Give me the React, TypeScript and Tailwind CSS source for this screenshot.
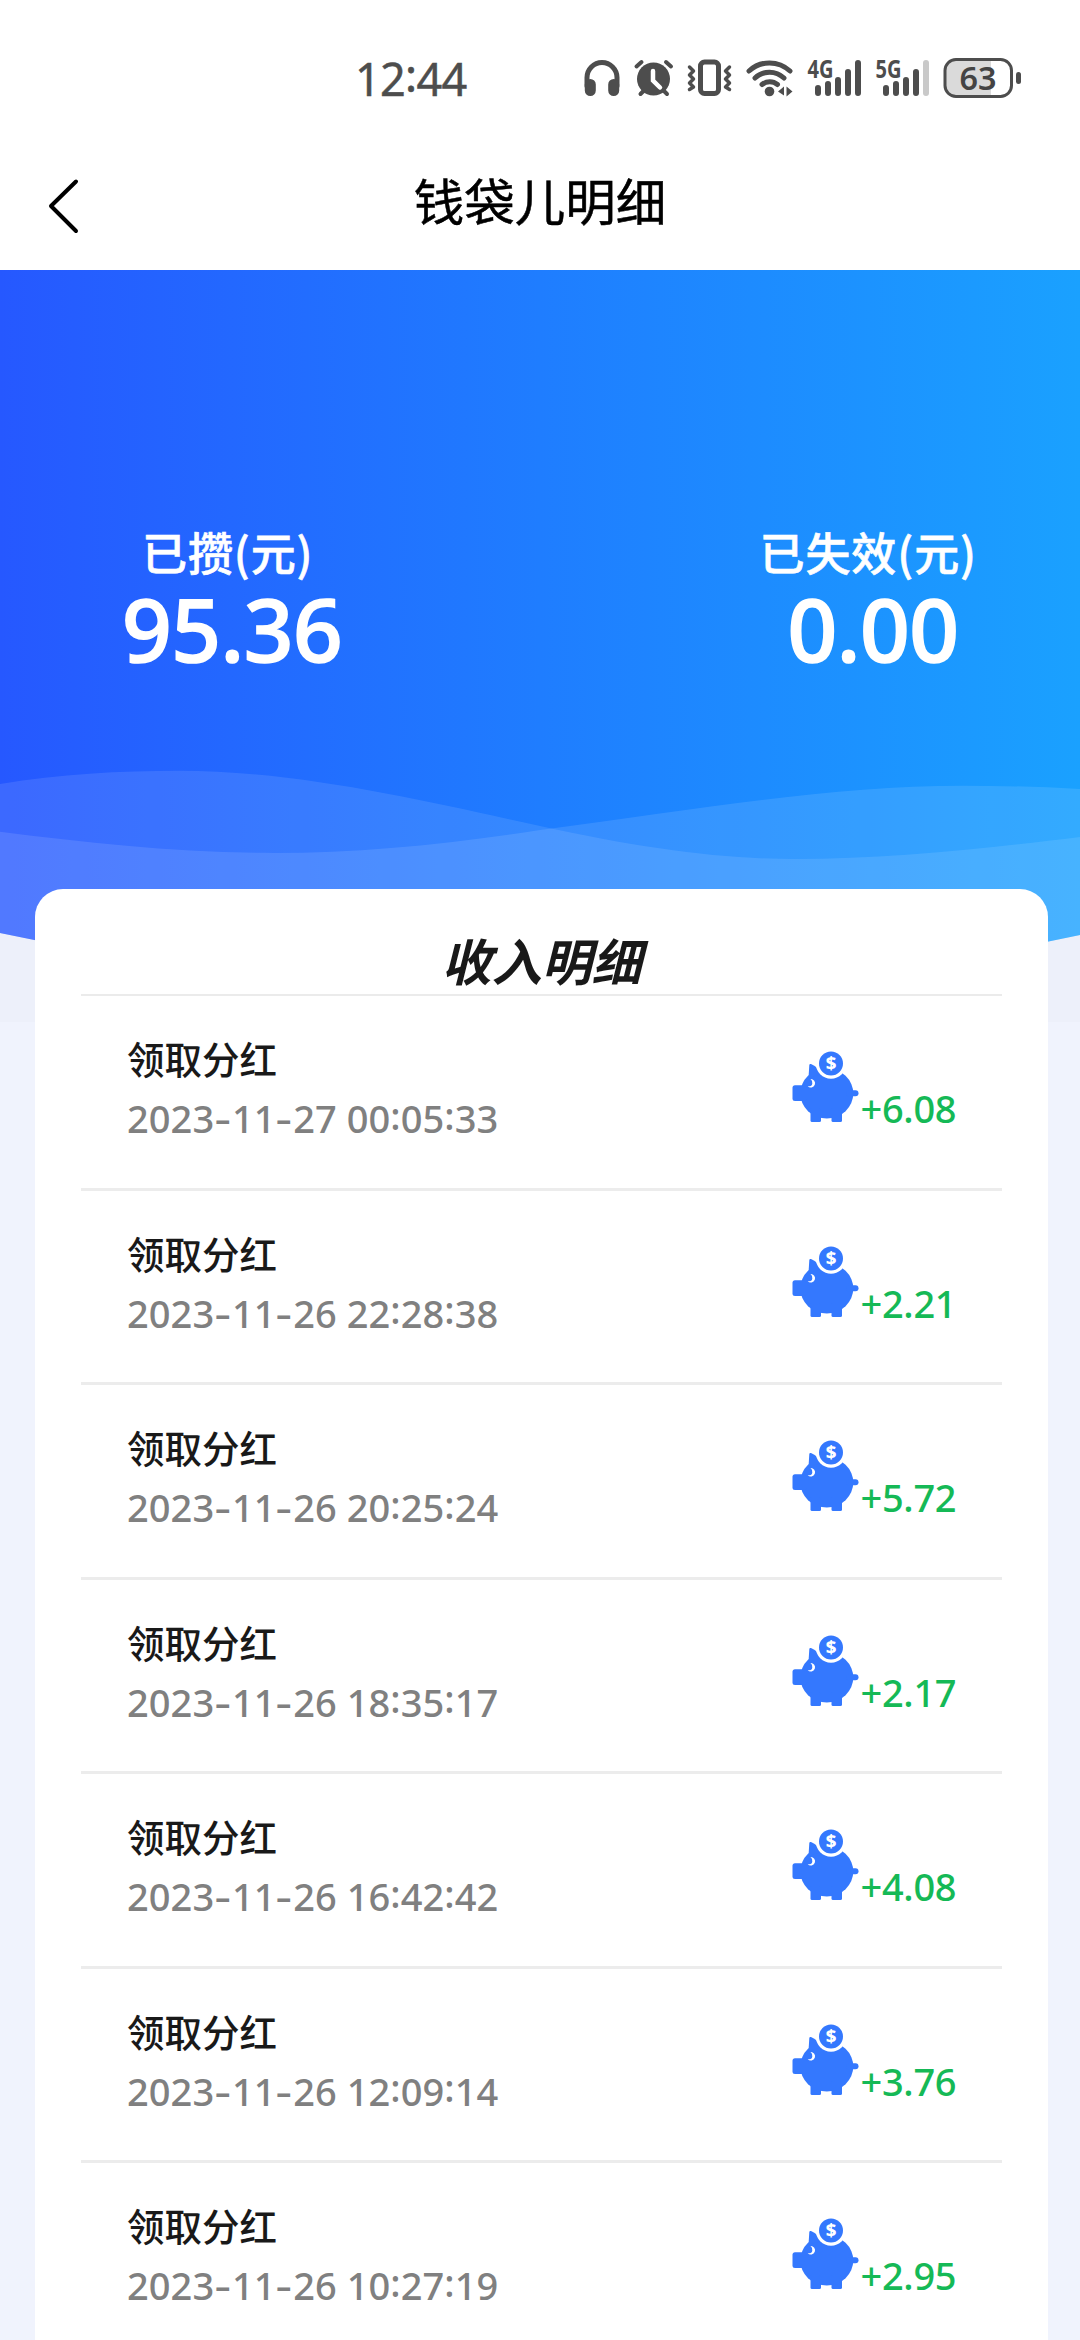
import React from "react";

const rows = [
  ["2023-11-27 00:05:33", "+6.08"],
  ["2023-11-26 22:28:38", "+2.21"],
  ["2023-11-26 20:25:24", "+5.72"],
  ["2023-11-26 18:35:17", "+2.17"],
  ["2023-11-26 16:42:42", "+4.08"],
  ["2023-11-26 12:09:14", "+3.76"],
  ["2023-11-26 10:27:19", "+2.95"],
];

const ink = "#4d4d4d";

function StatusIcons() {
  return (
    <svg width="444" height="50" viewBox="580 52 444 50" fill="none" className="shrink-0">
      <g stroke={ink} strokeLinecap="round" strokeLinejoin="round">
        <path d="M587 86V77.500a15 15 0 0 1 30 0V86" strokeWidth="5" />
        <path d="M590.300 84.500v6M613.700 84.500v6" strokeWidth="11" />
        <path d="M636.500 66.500l5-4.500M666 62l5 4.500M640.500 94l4-4M667 94l-4-4" strokeWidth="4" />
        <path d="M689.500 67l4 4-4 4 4 4-4 4 4 4-4 2.500" strokeWidth="3.500" />
        <path d="M729.500 67l-4 4 4 4-4 4 4 4-4 4 4 2.500" strokeWidth="3.500" />
        <rect x="700.500" y="62" width="18" height="31.500" rx="4" strokeWidth="5" />
        <path d="M749 71a30 30 0 0 1 41 0M755 78a21 21 0 0 1 29 0M762 84.500a12 12 0 0 1 15.500 0" strokeWidth="5" />
        <path d="M818 88v5M828 84v9M838 80v13M848 72v21M858 63v30" strokeWidth="6" />
        <path d="M886 88v5M896 84v9M906 80v13M916 72v21" strokeWidth="6" />
        <path d="M926 63v30" strokeWidth="6" stroke="#c9c9c9" />
      </g>
      <circle cx="653.500" cy="79" r="16.500" fill={ink} />
      <path d="M653 71v9.500l7 7" stroke="#fff" strokeWidth="4.500" strokeLinecap="round" />
      <circle cx="769.500" cy="91.500" r="4.800" fill={ink} />
      <path d="M778 91.500l6-5v9zM786.500 86.500l6 5-6 5z" fill={ink} />
      <text x="807.500" y="77.500" fontSize="24.500" textLength="26" lengthAdjust="spacingAndGlyphs" fontWeight="700" fill={ink} fontFamily="Noto Sans">4G</text>
      <text x="875.500" y="77.500" fontSize="24.500" textLength="26" lengthAdjust="spacingAndGlyphs" fontWeight="700" fill={ink} fontFamily="Noto Sans">5G</text>
      <path d="M991 60v36h-34q-11 0-11-11V71q0-11 11-11z" fill="#dadada" />
      <rect x="945" y="59.500" width="66.500" height="37" rx="11" stroke={ink} strokeWidth="3" />
      <path d="M1018.500 74.500v7" stroke={ink} strokeWidth="5" strokeLinecap="round" />
      <text x="959.500" y="90" fontSize="32.500" textLength="37" lengthAdjust="spacingAndGlyphs" fontWeight="600" fill="#444" fontFamily="Noto Sans">63</text>
    </svg>
  );
}

function Pig() {
  return (
    <svg width="68" height="74" viewBox="-1 0 68 74" className="shrink-0">
      <g fill="#3478fe">
        <ellipse cx="34.800" cy="43.500" rx="26.500" ry="25" />
        <path d="M16.500 28l.8-13q.2-1.500 1.700-.9 7 3 10.500 9.400z" />
        <rect x="0.500" y="35.200" width="14" height="15.800" rx="2.500" />
        <rect x="54" y="40.300" width="12.500" height="6" rx="3" />
        <rect x="18.500" y="58" width="10.500" height="14" rx="1.500" />
        <rect x="39.500" y="58" width="10.500" height="14" rx="1.500" />
      </g>
      <circle cx="39" cy="13.500" r="15.200" fill="#fff" />
      <circle cx="39" cy="13.500" r="12" fill="#3478fe" />
      <path d="M18.500 29a4.300 4.300 0 1 1-2.800 7.300q4 .5 4.600-2.600.4-3-1.800-4.700z" fill="#fff" />
      <text x="39" y="19.800" textAnchor="middle" fontSize="18.500" fontWeight="800" fill="#fff" fontFamily="Noto Sans">$</text>
    </svg>
  );
}

function Digits({ value }: { value: string }) {
  return (
    <>
      {value.split(/([-:])/).map((part, i) => {
        if (part === "-")
          return <span key={i} className="inline-block w-[17.700px] origin-center scale-x-[1.350] text-center">-</span>;
        if (part === ":")
          return <span key={i} className="relative -top-[0.080em]">:</span>;
        return <span key={i}>{part}</span>;
      })}
    </>
  );
}

function Total({ label, value }: { label: string; value: string }) {
  return (
    <div className="flex flex-col whitespace-nowrap font-['Noto_Sans_CJK_SC',sans-serif]">
      <div className="h-[66px] text-[45px] leading-[64px] font-medium tracking-[0.900px] [-webkit-text-stroke:0.6px_white]">{label}</div>
      <div className="h-[84px] font-['Noto_Sans',sans-serif] text-[87px] leading-[84px] font-medium tracking-[-0.500px] [-webkit-text-stroke:1.6px_white]">{value}</div>
    </div>
  );
}

export default function App() {
  return (
    <div className="h-[2340px] w-[1080px] overflow-hidden bg-[#f0f3fd] font-['Noto_Sans','Noto_Sans_CJK_SC',sans-serif] text-[#191919]">
      <header className="h-[270px] bg-white">
        <div className="flex h-[138px] items-start pl-[355px] pt-[52px]">
          <div className="w-[225px] text-[45px] leading-[53px] tracking-[-0.700px] text-[#4d4d4d] [-webkit-text-stroke:0.5px_#4d4d4d]">
            <Digits value="12:44" />
          </div>
          <StatusIcons />
        </div>
        <div className="flex h-[124px] items-center">
          <svg width="90" height="70" viewBox="0 0 90 70" className="shrink-0" fill="none">
            <path d="M76 16.500L51 41l25 25" stroke="#000" strokeWidth="4" strokeLinecap="round" strokeLinejoin="round" />
          </svg>
          <h1 className="w-[900px] pb-[2px] text-center font-['Noto_Sans_CJK_SC',sans-serif] text-[50.500px] leading-[60px] text-black [-webkit-text-stroke:0.5px_black]">钱袋儿明细</h1>
        </div>
      </header>
      <main className="relative">
        <svg width="1080" height="752" viewBox="0 270 1080 752" className="absolute left-0 top-0">
          <defs>
            <linearGradient id="sky">
              <stop offset="0" stopColor="#2658ff" />
              <stop offset=".5" stopColor="#1f7dff" />
              <stop offset="1" stopColor="#1aa1ff" />
            </linearGradient>
          </defs>
          <rect y="270" width="1080" height="752" fill="#edf0fa" />
          <path d="M0 270H1080V935Q540 1050 0 933z" fill="url(#sky)" />
          <path d="M0 784C60 774 119 770.700 179 770.700C300 770.700 430 802 540 826C640 848 720 859 795 859C890 859 990 848 1080 837V935Q540 1050 0 933z" fill="#fff" fillOpacity=".1" />
          <path d="M0 831.700C90 843 180 853 275 853C360 853 450 844 540 830C700 809 830 785.700 963 785.700Q1022 785.700 1080 789V935Q540 1050 0 933z" fill="#fff" fillOpacity=".11" />
        </svg>
        <section className="relative flex h-[619px] justify-between pl-[122px] pr-[103px] pt-[250px] text-white">
          <div className="[&>div>div:first-child]:pl-[20px]">
            <Total label="已攒(元)" value="95.36" />
          </div>
          <div className="[&>div>div:last-child]:pl-[28px]">
            <Total label="已失效(元)" value="0.00" />
          </div>
        </section>
        <section className="relative ml-[35px] mr-[32px] h-[1500px] rounded-t-[28px] bg-white px-[46px]">
          <h2 className="h-[107px] border-b-2 border-[#ebebeb] pt-[43px] text-center text-[50px] leading-[60px] font-bold italic">收入明细</h2>
          {rows.map(([time, amount]) => (
            <div key={time} className="flex h-[194.500px] justify-between border-b-[3px] border-[#ececec] pl-[46px] pr-[46px]">
              <div className="pt-[41px]">
                <div className="text-[37.500px] leading-[46px] font-medium">领取分红</div>
                <div className="mt-[11px] h-[48px] whitespace-pre text-[38px] leading-[48px] font-medium tracking-[0.060px] text-[#808080]">
                  <Digits value={time} />
                </div>
              </div>
              <div className="flex pt-[54px]">
                <Pig />
                <div className="w-[97px] whitespace-nowrap pl-[1.500px] pt-[34px] text-[38px] leading-[48px] font-medium tracking-[-0.300px] text-[#15b956]">{amount}</div>
              </div>
            </div>
          ))}
        </section>
      </main>
    </div>
  );
}
